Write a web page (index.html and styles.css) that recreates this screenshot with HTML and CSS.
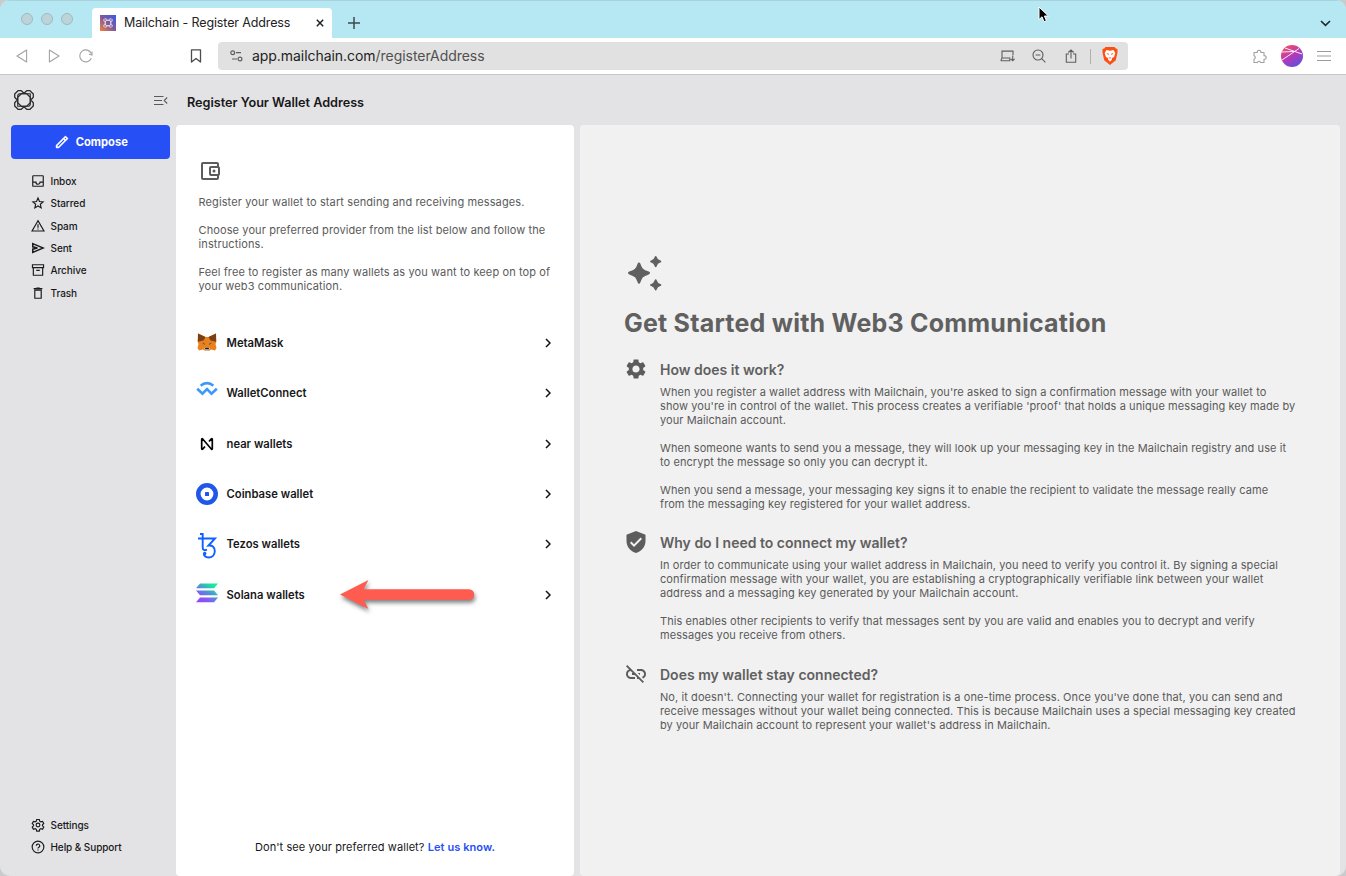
FILE: index.html
```html
<!DOCTYPE html>
<html lang="en">
<head>
<meta charset="utf-8">
<title>Mailchain - Register Address</title>
<link rel="stylesheet" href="styles.css">
</head>
<body>
<div class="window">
  <header class="tabbar">
    <div class="lights"><i></i><i></i><i></i></div>
    <div class="tab">
      <svg class="favicon" width="16" height="16" viewBox="0 0 16 16"><defs><linearGradient id="fav" x1="0" y1="1" x2="1" y2="0"><stop offset="0" stop-color="#f5803c"/><stop offset=".5" stop-color="#7d5a9a"/><stop offset="1" stop-color="#3a5be6"/></linearGradient></defs><rect width="16" height="16" fill="url(#fav)"/><g fill="none" stroke="#f3e8f5" stroke-width=".9"><rect x="5.300" y="5.300" width="5.400" height="5.400" rx="1.700"/><path d="M5.300 7.500L3.900 6.200V4.600l.7-.7h1.600l1.300 1.300M10.700 7.500l1.400-1.300V4.600l-.7-.7H9.800L8.500 5.200M5.300 8.500L3.900 9.800v1.600l.7.700h1.600l1.300-1.300M10.700 8.500l1.400 1.300v1.600l-.7.700H9.800l-1.300-1.300"/></g></svg>
      <span class="tab-title">Mailchain - Register Address</span>
      <svg class="tab-close" width="8" height="8" viewBox="0 0 8 8"><path d="M.8.8l6.400 6.400M7.200.8L.8 7.200" stroke="#222" stroke-width="1.500"/></svg>
    </div>
    <svg class="newtab" width="12" height="12" viewBox="0 0 12 12"><path d="M6 0v12M0 6h12" stroke="#3c4a4e" stroke-width="1.500"/></svg>
    <svg class="tabs-menu" width="11" height="7" viewBox="0 0 11 7"><path d="M1 1l4.500 4.300L10 1" fill="none" stroke="#1e2a2d" stroke-width="1.600"/></svg>
    <svg class="cursor" width="12" height="18" viewBox="0 0 12 18"><path d="M1 1v12.600l3-2.800 2 4.900 2.400-1-2-4.700h4z" fill="#000" stroke="#fff" stroke-width="1"/></svg>
  </header>

  <div class="toolbar">
    <div class="nav-buttons">
      <svg width="12" height="14" viewBox="0 0 12 14"><path d="M10.600 1v12L1 7z" fill="none" stroke="#a3a3a3" stroke-width="1.100" stroke-linejoin="round"/></svg>
      <svg width="12" height="14" viewBox="0 0 12 14"><path d="M1.400 1v12L11 7z" fill="none" stroke="#a3a3a3" stroke-width="1.100" stroke-linejoin="round"/></svg>
      <svg width="14" height="14" viewBox="0 0 14 14"><path d="M12.300 9.200A6 6 0 1 1 12.300 4.600M13 2.500v3.500l-3-.8" fill="none" stroke="#a3a3a3" stroke-width="1.100"/></svg>
    </div>
    <svg class="bookmark" width="12" height="14" viewBox="0 0 12 14"><path d="M1.500.8h9v12.200L6 9.500 1.500 13z" fill="none" stroke="#4c4c4c" stroke-width="1.300" stroke-linejoin="round"/></svg>
    <div class="address">
      <svg width="13" height="12" viewBox="0 0 13 12" fill="none" stroke="#606060" stroke-width="1.200"><circle cx="2.700" cy="2.700" r="1.900"/><path d="M6 2.700h5M2 9h5"/><circle cx="10" cy="9" r="1.900"/></svg>
      <span class="url"><b>app.mailchain.com</b>/registerAddress</span>
      <div class="address-actions">
        <svg width="15" height="12" viewBox="0 0 15 12" fill="none" stroke="#5f5f5f" stroke-width="1.100"><path d="M2 7.500V1.100h11v4M.8 10.700h9V8H2L.8 10.700M12.700 5.500v5.300M10.700 8.800l2 2 2-2"/></svg>
        <svg width="14" height="14" viewBox="0 0 14 14" fill="none" stroke="#5f5f5f" stroke-width="1.100"><circle cx="6" cy="6" r="5"/><path d="M3.600 6h4.800M9.700 9.700l3.700 3.600"/></svg>
        <svg width="12" height="14" viewBox="0 0 12 14" fill="none" stroke="#5f5f5f" stroke-width="1.100"><path d="M4 5H1.300v8.200h9.400V5H8M6 9.500V1M3.300 3.500L6 .9l2.700 2.600"/></svg>
        <i class="divider"></i>
        <svg width="16" height="18" viewBox="0 0 16 18"><path d="M3.500 0h9l1.300 1.500 1.600.4.200 3.200-1.800 8.200L8 18l-5.800-4.700L.4 5.100l.2-3.200 1.600-.4z" fill="#fb4f14"/><path d="M4.500 3l3.500.8 3.500-.8 1.800 3-1.300 4-2 1-.3 2L8 14.500 6.300 13 6 11l-2-1-1.300-4z" fill="#fff"/><path d="M4.500 6l2.300.8-.5 1.400zM11.500 6l-2.300.8.500 1.400zM6.500 10.500h3L8 11.800z" fill="#fb4f14"/></svg>
      </div>
    </div>
    <div class="browser-actions">
      <svg width="15" height="15" viewBox="0 0 15 15"><path d="M2 3.500h3.300a1.800 1.800 0 1 1 3.500 0H12v3.200a1.800 1.800 0 1 1 0 3.500v3.300H8.700a1.700 1.700 0 0 0-3.300 0H2v-3.200a1.900 1.900 0 0 0 0-3.600z" fill="none" stroke="#a0a0a0" stroke-width="1.100" stroke-linejoin="round"/></svg>
      <svg width="22" height="22" viewBox="0 0 22 22"><defs><linearGradient id="av" x1=".2" y1="0" x2=".8" y2="1"><stop offset="0" stop-color="#f5505c"/><stop offset=".5" stop-color="#b23ab8"/><stop offset="1" stop-color="#5b50e0"/></linearGradient><clipPath id="avc"><circle cx="11" cy="11" r="11"/></clipPath></defs><g clip-path="url(#avc)"><rect width="22" height="22" fill="url(#av)"/><path d="M1 15L18 3.500M4 3l17 6M0 7l13-.5" fill="none" stroke="#ffe9fb" stroke-width="1"/></g></svg>
      <svg width="14" height="12" viewBox="0 0 14 12"><path d="M0 1.500h14M0 6h14M0 10.500h14" stroke="#9c9c9c" stroke-width="1.100"/></svg>
    </div>
  </div>

  <div class="app">
    <aside class="sidebar">
      <div class="brand">
        <svg width="22" height="22" viewBox="0 0 22 22" fill="none" stroke="#2d2d30" stroke-width="1.300" stroke-linejoin="round"><path d="M8.300 4.700h5.400l3.600 3.600v5.400l-3.600 3.600H8.300l-3.600-3.600V8.300z"/><path d="M11 4.200L8.300 1.700H5L1.700 5v3.300L4.200 11l-2.500 2.700V17L5 20.300h3.300l2.700-2.500 2.700 2.500H17l3.300-3.300v-3.300L17.800 11l2.500-2.700V5L17 1.700h-3.300z"/><path d="M4.700 11V6.200l1.500-1.500H11l6.300 0v6.300M17.300 11v4.800l-1.500 1.500H11l-6.300 0V11" stroke-width="1.100"/></svg>
        <svg width="14" height="10" viewBox="0 0 14 10"><path d="M0 1.500h9.500M0 5.500h8M0 9.500h9.500M13.200 2.500l-3 3 3 3" fill="none" stroke="#5a5a5e" stroke-width="1.100"/></svg>
      </div>
      <button class="compose">
        <svg width="16" height="16" viewBox="0 0 24 24" fill="#fff"><path d="M15.728 9.686l-1.414-1.414L5 17.586V19h1.414l9.314-9.314zm1.414-1.414l1.414-1.414-1.414-1.414-1.414 1.414 1.414 1.414zM7.242 21H3v-4.243L16.435 3.322a1 1 0 0 1 1.414 0l2.829 2.829a1 1 0 0 1 0 1.414L7.243 21z" stroke="#fff" stroke-width=".6"/></svg>
        <span>Compose</span>
      </button>
      <nav class="menu">
        <a><svg viewBox="0 0 24 24"><path d="M4 3h16a1 1 0 0 1 1 1v16a1 1 0 0 1-1 1H4a1 1 0 0 1-1-1V4a1 1 0 0 1 1-1zM3 14h5.500a3.500 3.500 0 0 0 7 0H21"/></svg>Inbox</a>
        <a><svg viewBox="0 0 24 24"><path d="M12 3.500l2.500 5.900 6.300.6-4.800 4.200 1.400 6.200L12 17.200l-5.400 3.200L8 14.200 3.200 10l6.300-.6z"/></svg>Starred</a>
        <a><svg viewBox="0 0 24 24"><path d="M12 3L1.800 20.500h20.400zM12 9v6M12 16.200v2"/></svg>Spam</a>
        <a><svg viewBox="0 0 24 24"><path d="M3 4.500l18 7.500L3 19.500v-5.500l8-2-8-2z" stroke-width="2.600"/></svg>Sent</a>
        <a><svg viewBox="0 0 24 24"><path d="M2.500 3h19v5h-19zM4 8v13h16V8M9 12.500h6"/></svg>Archive</a>
        <a><svg viewBox="0 0 24 24"><path d="M6.500 7v14h11V7zM4.500 4.500h15M9 3.500h6"/></svg>Trash</a>
      </nav>
      <nav class="menu menu-bottom">
        <a><svg viewBox="0 0 24 24"><path d="M9.800 2.500h4.400l.7 3 1.900 1.100 3-.9 2.100 3.700-2.200 2.100v1.900l2.200 2.100-2.100 3.700-3-.9-1.900 1.100-.7 3H9.800l-.7-3-1.900-1.100-3 .9-2.100-3.700 2.200-2.100v-1.900L2.100 9.400l2.100-3.700 3 .9 1.900-1.100z"/><circle cx="12" cy="12" r="3.200"/></svg>Settings</a>
        <a><svg viewBox="0 0 24 24"><circle cx="12" cy="12" r="10"/><path d="M9 10a3 3 0 1 1 4.500 2.500c-1 .6-1.500 1-1.500 2.200M12 16.200v2"/></svg>Help &amp; Support</a>
      </nav>
    </aside>

    <main class="main">
      <h1 class="page-title">Register Your Wallet Address</h1>
      <div class="panels">
        <section class="wallets">
          <svg class="wallet-icon" width="24" height="24" viewBox="0 0 24 24" fill="#5c5c5c"><path d="M21 7.280V5c0-1.100-.9-2-2-2H5c-1.110 0-2 .9-2 2v14c0 1.100.89 2 2 2h14c1.100 0 2-.9 2-2v-2.280A2 2 0 0 0 22 15V9a2 2 0 0 0-1-1.720zM20 9v6h-7V9h7zM5 19V5h14v2h-6c-1.100 0-2 .9-2 2v6c0 1.100.9 2 2 2h6v2H5z"/><circle cx="16" cy="12" r="1.500"/></svg>
          <div class="intro">
            <p>Register your wallet to start sending and receiving messages.</p>
            <p>Choose your preferred provider from the list below and follow the<br>instructions.</p>
            <p>Feel free to register as many wallets as you want to keep on top of<br>your web3 communication.</p>
          </div>
          <ul class="wallet-list">
            <li><svg class="logo mm" viewBox="0 0 22 22"><path d="M2 2.500l7.500 3.500h3l7.500-3.500 .5 8-1 2.500 1 4-1.500 2.500-4-.9-2 1.300h-3.500L7 18.600l-4 .9L1.500 17l1-4-1-2.500z" fill="#e8821e"/><path d="M2 2.500L9.500 6 7.500 9.500l-5.500 1.300zM20 2.500L12.500 6l2 3.500 5.500 1.300z" fill="#7a3f17"/><path d="M6 11.500l2.500 1 .3 1.500zM16 11.500l-2.500 1-.3 1.500z" fill="#454347"/><path d="M8 17.200l1.200-.7h3.600l1.200.7-1.500 2.500h-3z" fill="#d9c9bc"/><path d="M9.300 16.700h3.400l.4 1.500H8.900z" fill="#1d1d1d"/></svg><span>MetaMask</span><svg class="chev" viewBox="0 0 6 10"><path d="M1 1l4 4-4 4"/></svg></li>
            <li><svg class="logo wc" viewBox="0 0 22 22"><path d="M4.700 5.700a9 9 0 0 1 12.600 0" fill="none" stroke="#3b99fc" stroke-width="2.600"/><path d="M1.200 8.700l5.300 5 4.500-4.500 4.500 4.500 5.300-5" fill="none" stroke="#3b99fc" stroke-width="2.600"/></svg><span>WalletConnect</span><svg class="chev" viewBox="0 0 6 10"><path d="M1 1l4 4-4 4"/></svg></li>
            <li><svg class="logo" viewBox="0 0 22 22"><path d="M9 13.500l-2.300 2.600q-1 .7-1-.5V6.400q0-1.200 1-.4l8.600 10q1 .8 1-.4V6.400q0-1.200-1-.5L13 8.500" fill="none" stroke="#000" stroke-width="1.700"/></svg><span>near wallets</span><svg class="chev" viewBox="0 0 6 10"><path d="M1 1l4 4-4 4"/></svg></li>
            <li><svg class="logo" viewBox="0 0 22 22"><circle cx="11" cy="11" r="8.700" fill="#fff" stroke="#1f58e8" stroke-width="4.600"/><rect x="9" y="9" width="4" height="4" rx=".6" fill="#1f58e8"/></svg><span>Coinbase wallet</span><svg class="chev" viewBox="0 0 6 10"><path d="M1 1l4 4-4 4"/></svg></li>
            <li><svg class="logo tez" viewBox="0 0 22 28"><path d="M2 6.500h17L12.500 13.500c4-.5 6.300 1.800 6.300 5.500 0 4-2.800 6.500-6.300 6.500-3 0-4.800-1.800-4.600-4M4 2h2.700v13.500c0 2.700 1.700 3.200 4.300 2.200" fill="none" stroke="#0f61ff" stroke-width="1.900"/><circle cx="8.700" cy="21.500" r="1.700" fill="#0f61ff"/></svg><span>Tezos wallets</span><svg class="chev" viewBox="0 0 6 10"><path d="M1 1l4 4-4 4"/></svg></li>
            <li><svg class="logo sol" viewBox="0 0 22 20"><defs><linearGradient id="sol" gradientUnits="userSpaceOnUse" x1="4" y1="20" x2="17" y2="0"><stop offset="0" stop-color="#9945ff"/><stop offset=".25" stop-color="#8a55f5"/><stop offset=".55" stop-color="#5090d8"/><stop offset=".85" stop-color="#22dca0"/><stop offset="1" stop-color="#14f195"/></linearGradient></defs><path d="M4 .5h18l-4 4.800H0zM0 7.400h18l4 4.800H4zM4 14.500h18l-4 4.800H0z" fill="url(#sol)"/></svg><span>Solana wallets</span>
              <svg class="pointer" width="150" height="44" viewBox="0 0 150 44"><path d="M5 19.500L33.500 5 28.500 14.200H134a5.200 5.200 0 0 1 0 10.500H28.500L33.500 34z" fill="#ff5b4f"/></svg>
              <svg class="chev" viewBox="0 0 6 10"><path d="M1 1l4 4-4 4"/></svg></li>
          </ul>
          <p class="missing">Don't see your preferred wallet? <a>Let us know.</a></p>
        </section>

        <section class="guide">
          <svg class="sparkles" width="36" height="36" viewBox="0 0 36 36" fill="#606060"><path d="M13 6.500q1 0 1.300 1 1.200 3.600 2.700 5.200 1.600 1.500 5.700 2.900 1.300.5 1.300 1.400t-1.300 1.400q-4.100 1.400-5.700 2.900-1.500 1.600-2.700 5.200-.3 1.200-1.300 1.200t-1.300-1.200q-1.200-3.600-2.700-5.200-1.600-1.500-5.700-2.900-1.300-.5-1.300-1.400t1.300-1.400q4.100-1.400 5.700-2.900Q10.500 11.100 11.700 7.500q.3-1 1.300-1z"/><path d="M29.700 0q.8 0 1 1 .8 2.800 3.600 3.600 1 .2 1 1t-1 1q-2.800.8-3.600 3.600-.2 1-1 1t-1-1q-.8-2.800-3.600-3.600-1-.2-1-1t1-1q2.800-.8 3.600-3.600.2-1 1-1zM29.700 23.300q.8 0 1 1 .8 2.800 3.600 3.600 1 .2 1 1t-1 1q-2.800.8-3.600 3.600-.2 1-1 1t-1-1q-.8-2.800-3.600-3.600-1-.2-1-1t1-1q2.800-.8 3.600-3.600.2-1 1-1z"/></svg>
          <h2>Get Started with Web3 Communication</h2>
          <article>
            <svg viewBox="0 0 24 24"><path d="M19.140 12.940c.04-.3.060-.61.060-.94 0-.32-.02-.64-.07-.94l2.030-1.580a.49.49 0 0 0 .12-.61l-1.920-3.320a.488.488 0 0 0-.59-.22l-2.390.96c-.5-.38-1.030-.7-1.620-.94l-.36-2.540a.484.484 0 0 0-.48-.41h-3.840c-.24 0-.43.170-.47.410l-.36 2.540c-.59.240-1.130.570-1.620.940l-2.390-.96c-.22-.08-.47 0-.59.220L2.740 8.870c-.12.210-.08.470.12.610l2.030 1.580c-.05.300-.09.630-.09.940s.02.640.07.940l-2.030 1.580a.49.49 0 0 0-.12.610l1.920 3.320c.12.220.37.290.59.220l2.390-.96c.5.380 1.030.7 1.620.940l.36 2.540c.05.240.24.410.48.410h3.840c.24 0 .44-.17.470-.41l.36-2.540c.59-.24 1.130-.56 1.620-.94l2.390.96c.22.080.47 0 .59-.22l1.920-3.320c.12-.22.070-.47-.12-.61l-2.010-1.580zM12 15.600A3.610 3.610 0 0 1 8.400 12c0-1.980 1.620-3.600 3.600-3.600s3.600 1.620 3.600 3.600-1.620 3.600-3.600 3.600z"/></svg>
            <div>
              <h3>How does it work?</h3>
              <p>When you register a wallet address with Mailchain, you're asked to sign a confirmation message with your wallet to<br>show you're in control of the wallet. This process creates a verifiable 'proof' that holds a unique messaging key made by<br>your Mailchain account.</p>
              <p>When someone wants to send you a message, they will look up your messaging key in the Mailchain registry and use it<br>to encrypt the message so only you can decrypt it.</p>
              <p>When you send a message, your messaging key signs it to enable the recipient to validate the message really came<br>from the messaging key registered for your wallet address.</p>
            </div>
          </article>
          <article>
            <svg viewBox="0 0 24 24"><path d="M12 1L2.500 4.700V11c0 5.550 4 10.740 9.500 12 5.500-1.260 9.500-6.450 9.500-12V4.700L12 1zm-2 16l-4-4 1.410-1.410L10 14.170l6.590-6.590L18 9l-8 8z"/></svg>
            <div>
              <h3>Why do I need to connect my wallet?</h3>
              <p>In order to communicate using your wallet address in Mailchain, you need to verify you control it. By signing a special<br>confirmation message with your wallet, you are establishing a cryptographically verifiable link between your wallet<br>address and a messaging key generated by your Mailchain account.</p>
              <p>This enables other recipients to verify that messages sent by you are valid and enables you to decrypt and verify<br>messages you receive from others.</p>
            </div>
          </article>
          <article>
            <svg viewBox="0 0 24 24"><path d="M17 7h-4v1.900h4c1.710 0 3.100 1.390 3.100 3.100 0 1.430-.98 2.630-2.310 2.980l1.460 1.460C20.880 15.610 22 13.950 22 12c0-2.760-2.240-5-5-5zm-1 4h-2.190l2 2H16v-2zM2 4.270l3.110 3.110A4.991 4.991 0 0 0 2 12c0 2.760 2.240 5 5 5h4v-1.900H7c-1.710 0-3.100-1.390-3.100-3.100 0-1.590 1.210-2.900 2.760-3.070L8.730 11H8v2h2.730L13 15.270V17h1.730l4.010 4L20 19.740 3.270 3 2 4.270z"/></svg>
            <div>
              <h3>Does my wallet stay connected?</h3>
              <p>No, it doesn't. Connecting your wallet for registration is a one-time process. Once you've done that, you can send and<br>receive messages without your wallet being connected. This is because Mailchain uses a special messaging key created<br>by your Mailchain account to represent your wallet's address in Mailchain.</p>
            </div>
          </article>
        </section>
      </div>
    </main>
  </div>
</div>
</body>
</html>
```
FILE: styles.css
```css
* { box-sizing: border-box; }
body { margin: 0; background: #c9cccd; font-family: Inter, "Liberation Sans", sans-serif; color: #18181a; }
h1, h2, h3, p, ul { margin: 0; padding: 0; }
svg { display: block; flex: none; }
.window { width: 1346px; height: 876px; display: flex; flex-direction: column; overflow: hidden; border-radius: 10px; background: #e3e3e5; }

.tabbar { position: relative; height: 38px; flex: none; display: flex; align-items: center; background: #b5e8f3; padding: 0 15px 0 21px; border-top: 1px solid #a9d3dc; }
.lights { display: flex; gap: 8px; width: 71px; margin-top: -2px; }
.lights i { width: 12px; height: 12px; border-radius: 50%; background: #bcd3d9; border: 1px solid #9fb9bf; }
.tab { align-self: flex-end; width: 240px; height: 30px; background: #fff; border-radius: 4px 4px 0 0; display: flex; align-items: center; padding: 0 8px; }
.tab-title { font-size: 12.500px; letter-spacing: -.13px; margin: -2px 0 0 8px; white-space: nowrap; color: #222; }
.tab-close { margin-left: auto; }
.newtab { margin: 6px 0 0 16px; }
.tabs-menu { margin: 7px 0 0 auto; }
.cursor { position: absolute; left: 1038px; top: 5px; }

.toolbar { height: 37px; flex: none; display: flex; align-items: center; background: #fff; border-bottom: 1px solid #c6c6c8; padding: 0 15px 0 16px; }
.nav-buttons { display: flex; gap: 19.500px; width: 174px; }
.address { height: 28px; width: 910px; margin-left: 16px; background: #e1e1e1; border-radius: 4px; display: flex; align-items: center; padding: 0 10px 0 12px; }
.url { margin: -2px 0 0 9px; font-size: 14px; letter-spacing: -.05px; color: #505050; white-space: nowrap; }
.url b { font-weight: 400; color: #222; }
.address-actions { margin-left: auto; display: flex; align-items: center; }
.address-actions svg + svg { margin-left: 18px; }
.address-actions svg:nth-of-type(2) { margin: 0 1px 0 17px; }
.address-actions .divider { width: 1px; height: 15px; background: #b0b0b0; margin: 0 11px 0 13px; }
.browser-actions { margin-left: auto; display: flex; align-items: center; gap: 14px; }

.app { flex: 1; min-height: 0; display: flex; }
.sidebar { width: 176px; flex: none; display: flex; flex-direction: column; padding: 0 6px 17.400px 11px; }
.brand { height: 50px; display: flex; justify-content: space-between; align-items: center; padding: 0 2px 0 2px; }
.compose { flex: none; height: 34px; border: 0; border-radius: 4px; background: #2650f6; color: #fff; font: 700 11.200px Inter, sans-serif; display: flex; align-items: center; justify-content: center; gap: 5.500px; padding: 0 0 0 1px; }
.menu { display: flex; flex-direction: column; padding: 10.600px 0 0 20px; }
.menu a { height: 22.400px; display: flex; align-items: center; gap: 5.500px; font-size: 10px; font-weight: 500; letter-spacing: -.08px; white-space: nowrap; }
.menu svg { width: 14px; height: 14px; fill: none; stroke: #1b1b1d; stroke-width: 2; }
.menu-bottom { margin-top: auto; }

.main { flex: 1; display: flex; flex-direction: column; padding-right: 6px; }
.page-title { height: 50px; line-height: 55px; padding-left: 11px; font-size: 12.700px; letter-spacing: -.03px; font-weight: 600; }
.panels { flex: 1; display: flex; gap: 6px; }
.wallets { width: 398px; background: #fff; border-radius: 4px; padding: 34px 20px 21px; display: flex; flex-direction: column; }
.wallet-icon { margin-left: 2px; }
.intro { margin: 12px 0 0 2.500px; }
.intro p, article p { font-size: 11px; line-height: 14px; letter-spacing: .11px; color: #5a5a5a; white-space: nowrap; }
.intro p + p, article p + p { margin-top: 14px; }
.wallet-list { list-style: none; margin-top: 24.800px; }
.wallet-list li { position: relative; height: 50.350px; display: flex; align-items: center; font-size: 11.250px; font-weight: 600; }
.logo { width: 22px; height: 22px; margin-right: 8.500px; }
.mm { margin-top: -2px; }
.wc { margin-top: -5px; }
.tez { height: 28px; margin-top: 4px; }
.sol { height: 20px; margin-top: -3px; }
.chev { width: 6px; height: 10px; margin-left: auto; margin-right: 3px; fill: none; stroke: #111; stroke-width: 1.500; }
.pointer { position: absolute; left: 139px; top: 5.500px; filter: drop-shadow(1px 3px 2px rgba(0, 0, 0, .5)); }
.missing { margin-top: auto; text-align: center; font-size: 11px; letter-spacing: .08px; line-height: 16px; }
.missing a { color: #2650f6; font-weight: 600; }

.guide { flex: 1; background: #f1f1f1; border-radius: 4px; padding: 131px 20px 0 44px; color: #606060; }
.sparkles { margin-left: 2px; }
.guide h2 { font-size: 25px; line-height: 30px; letter-spacing: .22px; margin: 16px 0 23px; font-weight: 700; white-space: nowrap; }
article { display: flex; gap: 12px; margin-bottom: 23px; }
article + article { margin-bottom: 24px; }
article > svg { width: 24px; height: 24px; fill: #5c5c5c; margin-top: -4px; }
article h3 { font-size: 14px; line-height: 18px; font-weight: 600; margin-bottom: 6px; }
article p { letter-spacing: .08px; }
```
